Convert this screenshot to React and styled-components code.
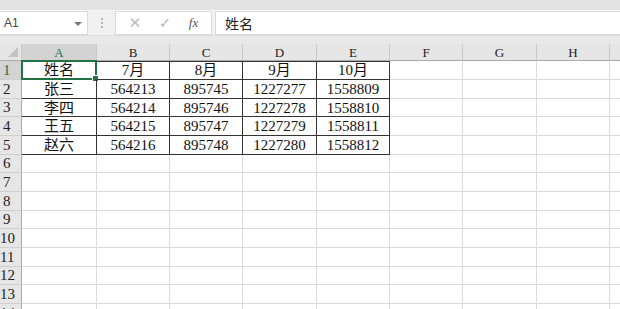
import React from 'react'
import styled, { createGlobalStyle, css } from 'styled-components'

const GlobalStyle = createGlobalStyle`
    body {
        margin: 0;
        background: #ffffff;
        font-family: "Liberation Sans", "Noto Sans CJK SC", sans-serif;
    }
`

const cols = ['A', 'B', 'C', 'D', 'E', 'F', 'G', 'H', '']
const colWidths = [75, 73, 73, 74, 73, 73, 74, 73, 73]
const rowHeights = [19, 19, 18, 19, 19, 18, 19, 19, 18, 19, 19, 18, 19, 19]

const data = [
    ['姓名', '7月', '8月', '9月', '10月'],
    ['张三', '564213', '895745', '1227277', '1558809'],
    ['李四', '564214', '895746', '1227278', '1558810'],
    ['王五', '564215', '895747', '1227279', '1558811'],
    ['赵六', '564216', '895748', '1227280', '1558812'],
]

const Page = styled.div`
    width: 620px;
    height: 309px;
    overflow: hidden;
    background: #e9e9e9;
`

const TopBand = styled.div`
    height: 10px;
    background: #e3e3e3;
    border-bottom: 1px solid #f6f6f6;
`

const FormulaBar = styled.div`
    height: 24px;
    display: flex;
    align-items: stretch;
    background: #f1f1f1;
    border-bottom: 1px solid #dcdcdc;
    margin-bottom: 8px;
`

const Box = styled.div`
    background: #ffffff;
    border: 1px solid #d9d9d9;
    display: flex;
    align-items: center;
    box-sizing: border-box;
`

const NameBox = styled(Box)`
    width: 88px;
    border-left: none;
    justify-content: space-between;
    padding: 0 5px 0 4px;
    font-size: 12px;
    color: #444;
`

const Caret = styled.span`
    width: 0;
    height: 0;
    border-left: 4px solid transparent;
    border-right: 4px solid transparent;
    border-top: 4px solid #777;
    margin-top: 1px;
`

const Grip = styled.div`
    width: 27px;
    display: flex;
    flex-direction: column;
    align-items: center;
    justify-content: center;
    gap: 2px;
    span {
        width: 2px;
        height: 2px;
        background: #b5b5b5;
    }
`

const ActionBox = styled(Box)`
    width: 97px;
    justify-content: space-around;
    padding: 0 4px;
`

const FormulaInput = styled(Box)`
    flex: 1;
    margin-left: 3px;
    border-right: none;
    padding-left: 9px;
    font-size: 14px;
    color: #222;
    font-family: "Noto Sans CJK SC", sans-serif;
`

const Fx = styled.span`
    font-family: "Liberation Serif", serif;
    font-style: italic;
    font-size: 13px;
    color: #555;
`

const Grid = styled.div`
    display: grid;
    grid-template-columns: 22px ${colWidths.map(w => w + 'px').join(' ')};
    grid-template-rows: 17px ${rowHeights.map(h => h + 'px').join(' ')};
    background: #ffffff;
`

const HeaderCell = styled.div`
    box-sizing: border-box;
    background: ${p => (p.$active ? '#d3d3d3' : '#e6e6e6')};
    color: ${p => (p.$active ? '#217346' : '#222')};
    border-right: 1px solid #c9c9c9;
    border-bottom: 1px solid ${p => (p.$active ? '#217346' : '#ababab')};
    font-family: "Liberation Serif", serif;
    font-size: 13px;
    display: flex;
    align-items: center;
    justify-content: center;
    line-height: 1;
`

const Corner = styled(HeaderCell)`
    position: relative;
    &::after {
        content: '';
        position: absolute;
        right: 3px;
        bottom: 3px;
        border-left: 10px solid transparent;
        border-bottom: 10px solid #c3c3c3;
    }
`

const RowHead = styled.div`
    box-sizing: border-box;
    background: ${p => (p.$active ? '#d3d3d3' : '#e6e6e6')};
    color: ${p => (p.$active ? '#217346' : '#222')};
    border-right: 1px solid ${p => (p.$active ? '#217346' : '#ababab')};
    border-bottom: 1px solid #cfcfcf;
    font-family: "Liberation Serif", serif;
    font-size: 15px;
    display: flex;
    align-items: center;
    padding-left: ${p => (p.$wide ? '0' : '3px')};
    line-height: 1;
`

const Cell = styled.div`
    position: relative;
    box-sizing: border-box;
    border-right: 1px solid #dadada;
    border-bottom: 1px solid #dadada;
    display: flex;
    align-items: center;
    justify-content: center;
    font-family: "Liberation Serif", "Noto Sans CJK SC", serif;
    font-size: 15px;
    line-height: 1;
    color: #111;
    padding-top: 1px;
    ${p =>
        p.$boxed &&
        css`
            border-right-color: #333;
            border-bottom-color: #333;
        `}
    ${p => p.$top && css`box-shadow: inset 0 1px 0 #333;`}
`

const Selection = styled.div`
    position: absolute;
    left: -1px;
    top: -1px;
    right: -1px;
    bottom: -1px;
    border: 2px solid #217346;
    &::after {
        content: '';
        position: absolute;
        right: -4px;
        bottom: -4px;
        width: 5px;
        height: 5px;
        background: #217346;
        border: 1px solid #fff;
    }
`

const Glyph = styled.span`
    font-size: 15px;
    color: #b9b9b9;
    font-family: "DejaVu Sans", sans-serif;
`

export default function App() {
    return (
        <Page>
            <GlobalStyle />
            <TopBand />
            <FormulaBar>
                <NameBox>
                    A1
                    <Caret />
                </NameBox>
                <Grip>
                    <span />
                    <span />
                    <span />
                </Grip>
                <ActionBox>
                    <Glyph>✕</Glyph>
                    <Glyph>✓</Glyph>
                    <Fx>fx</Fx>
                </ActionBox>
                <FormulaInput>姓名</FormulaInput>
            </FormulaBar>
            <Grid>
                <Corner />
                {cols.map((c, i) => (
                    <HeaderCell key={i} $active={c === 'A'}>
                        {c}
                    </HeaderCell>
                ))}
                {rowHeights.map((_, r) => (
                    <React.Fragment key={r}>
                        <RowHead $active={r === 0} $wide={r >= 9}>
                            {r + 1}
                        </RowHead>
                        {cols.map((c, ci) => {
                            const boxed = r < 5 && ci < 5
                            return (
                                <Cell key={ci} $boxed={boxed} $top={r === 0 && ci > 0 && ci < 5}>
                                    {boxed ? data[r][ci] : ''}
                                    {r === 0 && ci === 0 && <Selection />}
                                </Cell>
                            )
                        })}
                    </React.Fragment>
                ))}
            </Grid>
        </Page>
    )
}
